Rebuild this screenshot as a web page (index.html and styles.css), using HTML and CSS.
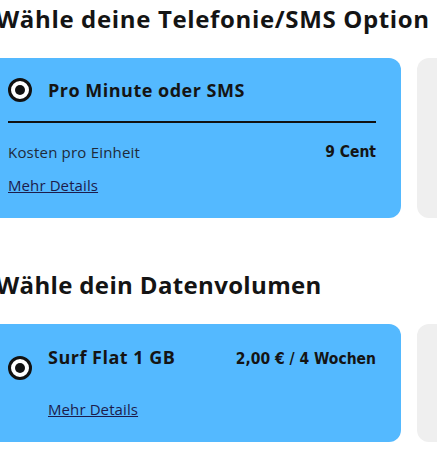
FILE: index.html
```html
<!DOCTYPE html>
<html lang="de">
<head>
<meta charset="utf-8">
<link rel="stylesheet" href="styles.css">
</head>
<body>
<div class="page">
  <section class="section">
    <h2 class="heading heading-wide">Wähle deine Telefonie/SMS Option</h2>
    <div class="row">
      <div class="card card-active">
        <div class="card-head">
          <span class="radio"></span>
          <span class="title">Pro Minute oder SMS</span>
        </div>
        <div class="divider"></div>
        <div class="cost-row">
          <span class="cost-label">Kosten pro Einheit</span>
          <span class="price">9 Cent</span>
        </div>
        <a class="details" href="#">Mehr Details</a>
      </div>
      <div class="card card-idle"></div>
    </div>
  </section>
  <section class="section section-second">
    <h2 class="heading">Wähle dein Datenvolumen</h2>
    <div class="row">
      <div class="card card-active card-data">
        <span class="radio radio-data"></span>
        <div class="data-body">
          <div class="data-top">
            <span class="title">Surf Flat 1 GB</span>
            <span class="price">2,00 € / 4 Wochen</span>
          </div>
          <a class="details details-data" href="#">Mehr Details</a>
        </div>
      </div>
      <div class="card card-idle card-idle-data"></div>
    </div>
  </section>
</div>
</body>
</html>
```
FILE: styles.css
```css
html, body {
  margin: 0;
  padding: 0;
  background: #ffffff;
  overflow: hidden;
}
body {
  width: 437px;
  height: 453px;
  font-family: "Open Sans", "DejaVu Sans", sans-serif;
  color: #141414;
}
.page {
  margin-left: -12px;
  width: 900px;
}
.section {
  display: flex;
  flex-direction: column;
}
.heading {
  margin: 0;
  padding: 3px 0 0 8px;
  font-size: 24px;
  line-height: 31px;
  font-weight: 700;
  letter-spacing: 0.35px;
  color: #141414;
  white-space: nowrap;
}
.heading-wide {
  letter-spacing: 0.65px;
}
.section-second .heading {
  margin-top: 48px;
}
.row {
  display: flex;
  gap: 16px;
  margin-top: 24px;
}
.card {
  width: 413px;
  border-radius: 12px;
  box-sizing: border-box;
  flex: none;
}
.card-active {
  background: #54b9ff;
  padding: 20px 25px 24px 20px;
  height: 160px;
}
.card-idle {
  background: #efefef;
  height: 160px;
}
.card-head {
  display: flex;
  align-items: center;
  gap: 16px;
  height: 24px;
}
.radio {
  width: 24px;
  height: 24px;
  box-sizing: border-box;
  border-radius: 50%;
  border: 3px solid #111;
  background: #fff;
  position: relative;
  flex: none;
}
.radio::after {
  content: "";
  position: absolute;
  left: 4px;
  top: 4px;
  width: 10px;
  height: 10px;
  border-radius: 50%;
  background: #111;
}
.title {
  font-size: 18px;
  font-weight: 700;
  letter-spacing: 0.5px;
}
.divider {
  height: 2px;
  background: #111;
  margin-top: 19px;
}
.cost-row {
  display: flex;
  justify-content: space-between;
  align-items: center;
  margin-top: 18px;
  height: 22px;
}
.cost-label {
  font-size: 15px;
  letter-spacing: 0.2px;
  color: #1e2a3a;
}
.price {
  font-family: "DejaVu Sans", sans-serif;
  font-stretch: condensed;
  font-size: 15.5px;
  font-weight: 700;
}
.details {
  display: inline-block;
  margin-top: 12px;
  font-size: 15px;
  letter-spacing: 0.1px;
  color: #1c1c4c;
  text-decoration: underline;
}
.card-data {
  height: 118px;
  display: flex;
  gap: 16px;
  padding-top: 21px;
}
.card-idle-data {
  height: 118px;
}
.radio-data {
  margin-top: 11px;
}
.data-body {
  flex: 1;
  display: flex;
  flex-direction: column;
}
.data-top {
  display: flex;
  justify-content: space-between;
  align-items: baseline;
}
.details-data {
  margin-top: 30px;
  align-self: flex-start;
}
```
